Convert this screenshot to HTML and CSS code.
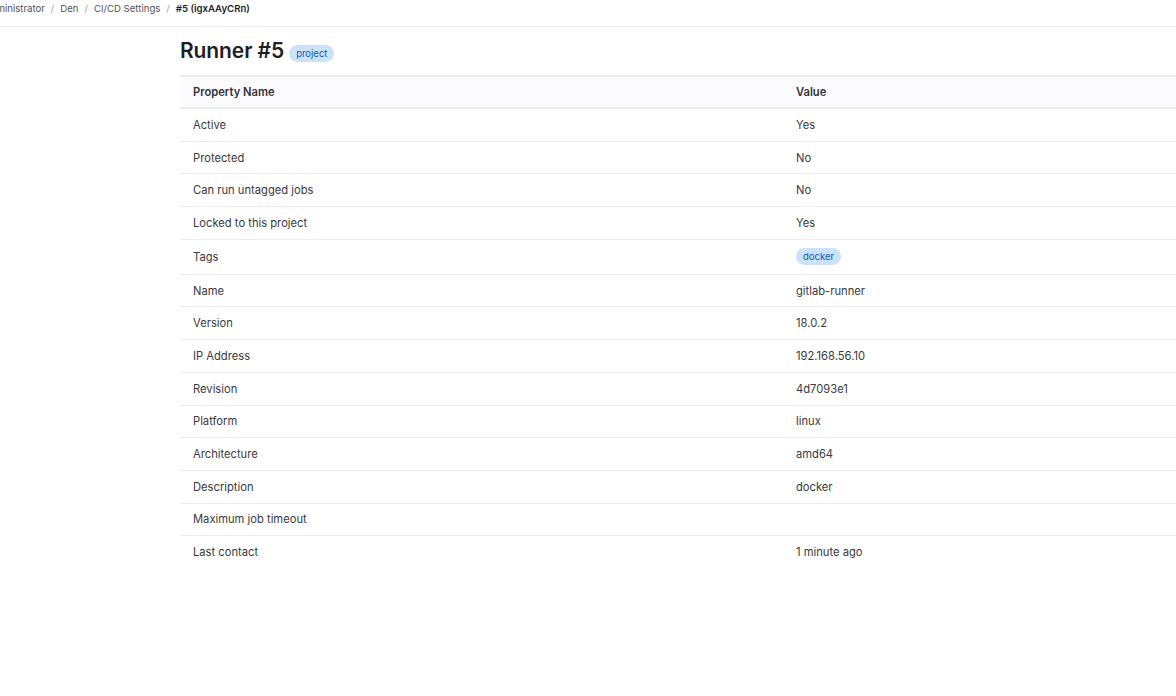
FILE: index.html
```html
<!DOCTYPE html>
<html>
<head>
<meta charset="utf-8">
<link rel="stylesheet" href="styles.css">
</head>
<body>
<header class="topbar">
  <nav class="crumbs">
    <span class="crumb">Administrator</span><span class="sep">/</span>
    <span class="crumb">Den</span><span class="sep">/</span>
    <span class="crumb">CI/CD Settings</span><span class="sep">/</span>
    <span class="crumb current">#5 (igxAAyCRn)</span>
  </nav>
</header>
<main class="content">
  <h1 class="title">Runner #5 <span class="badge badge-title">project</span></h1>
  <table class="props">
    <thead>
      <tr><th>Property Name</th><th>Value</th></tr>
    </thead>
    <tbody>
      <tr><td>Active</td><td>Yes</td></tr>
      <tr><td>Protected</td><td>No</td></tr>
      <tr><td>Can run untagged jobs</td><td>No</td></tr>
      <tr><td>Locked to this project</td><td>Yes</td></tr>
      <tr class="tagrow"><td>Tags</td><td><span class="badge">docker</span></td></tr>
      <tr><td>Name</td><td>gitlab-runner</td></tr>
      <tr><td>Version</td><td>18.0.2</td></tr>
      <tr><td>IP Address</td><td>192.168.56.10</td></tr>
      <tr><td>Revision</td><td>4d7093e1</td></tr>
      <tr><td>Platform</td><td>linux</td></tr>
      <tr><td>Architecture</td><td>amd64</td></tr>
      <tr><td>Description</td><td>docker</td></tr>
      <tr><td>Maximum job timeout</td><td></td></tr>
      <tr class="last"><td>Last contact</td><td>1 minute ago</td></tr>
    </tbody>
  </table>
</main>
</body>
</html>
```
FILE: styles.css
```css
html, body {
  margin: 0;
  padding: 0;
  background: #fff;
  overflow: hidden;
}
body {
  font-family: Inter, "Noto Sans", "Liberation Sans", sans-serif;
  color: #3a3940;
  width: 1176px;
  height: 696px;
}
.topbar {
  height: 26px;
  border-bottom: 1px solid #ececef;
  display: flex;
  align-items: center;
}
.crumbs {
  margin-left: -16px;
  margin-top: -10px;
  display: flex;
  align-items: center;
  font-size: 9.6px;
  color: #535158;
  white-space: nowrap;
}
.sep {
  color: #a4a3a8;
  margin: 0 6px;
}
.crumb.current {
  font-weight: 600;
  color: #1f1e24;
}
.content {
  margin-left: 180px;
  width: 1206px;
}
.title {
  margin: 10px 0 10px 0;
  font-size: 21px;
  font-weight: 600;
  color: #1f1e24;
  line-height: 28px;
  display: flex;
  align-items: center;
  letter-spacing: -0.1px;
}
.badge {
  display: inline-block;
  background: #cbe2f9;
  color: #0b5cad;
  font-size: 9.5px;
  font-weight: 400;
  border-radius: 10px;
  padding: 0 7px;
  line-height: 17px;
  letter-spacing: 0;
}
.badge-title {
  margin-left: 5px;
  margin-top: 5px;
}
.props {
  width: 100%;
  border-collapse: collapse;
  font-size: 11.2px;
  table-layout: fixed;
}
.props th {
  text-align: left;
  font-weight: 600;
  background: #fbfafd;
  color: #333238;
  height: 30px;
  padding: 0 13px;
  border-top: 2px solid #ececef;
  border-bottom: 2px solid #ececef;
}
.props td {
  height: 31.7px;
  padding: 0 13px;
  border-bottom: 1px solid #ececef;
}
.props tr.tagrow td {
  height: 34px;
}
.props tr.last td {
  border-bottom: none;
}
```
